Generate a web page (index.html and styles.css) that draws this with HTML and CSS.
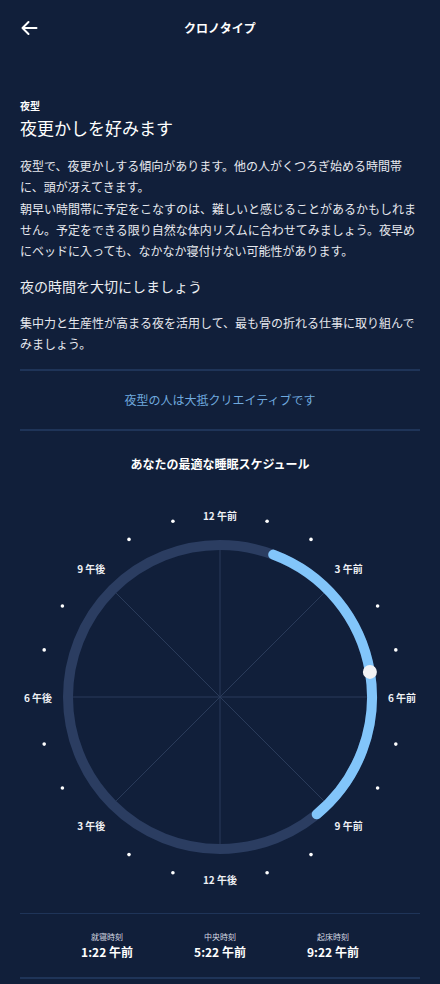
FILE: index.html
```html
<!DOCTYPE html>
<html lang="ja">
<head>
<meta charset="utf-8">
<title>クロノタイプ</title>
<link rel="stylesheet" href="styles.css">
</head>
<body>
<header class="topbar">
  <div class="back">
    <svg width="18" height="16" viewBox="0 0 18 16"><path d="M16.5 8H2.5M8.5 2L2.5 8L8.5 14" fill="none" stroke="#fff" stroke-width="2" stroke-linecap="round" stroke-linejoin="round"/></svg>
  </div>
  <div class="title">クロノタイプ</div>
  <div></div>
</header>
<main class="content">
  <div class="kicker">夜型</div>
  <h1 class="heading">夜更かしを好みます</h1>
  <p class="para">夜型で、夜更かしする傾向があります。他の人がくつろぎ始める時間帯に、頭が冴えてきます。<br>朝早い時間帯に予定をこなすのは、難しいと感じることがあるかもしれません。予定をできる限り自然な体内リズムに合わせてみましょう。夜早めにベッドに入っても、なかなか寝付けない可能性があります。</p>
  <h2 class="subhead">夜の時間を大切にしましょう</h2>
  <p class="para para2">集中力と生産性が高まる夜を活用して、最も骨の折れる仕事に取り組んでみましょう。</p>
  <div class="tagline">夜型の人は大抵クリエイティブです</div>
  <div class="chart-title">あなたの最適な睡眠スケジュール</div>
  <svg class="clock" width="400" height="390" viewBox="0 0 400 390">
    <g stroke="#2a3b5a" stroke-width="1">
      <line x1="200" y1="48" x2="200" y2="342"/>
      <line x1="53" y1="195" x2="347" y2="195"/>
      <line x1="96.1" y1="91.1" x2="303.9" y2="298.9"/>
      <line x1="303.9" y1="91.1" x2="96.1" y2="298.9"/>
    </g>
    <circle cx="200" cy="195" r="152" fill="none" stroke="#2b3d61" stroke-width="10"/>
    <path d="M253.23 52.62 A152 152 0 0 1 296.69 312.28" fill="none" stroke="#82c5fa" stroke-width="10" stroke-linecap="round"/>
    <circle cx="349.9" cy="169.9" r="7" fill="#f2f2f4"/>
    <g fill="#ffffff">
      <circle cx="247.1" cy="19.2" r="1.8"/>
      <circle cx="291" cy="37.4" r="1.8"/>
      <circle cx="357.6" cy="104" r="1.8"/>
      <circle cx="375.8" cy="147.9" r="1.8"/>
      <circle cx="375.8" cy="242.1" r="1.8"/>
      <circle cx="357.6" cy="286" r="1.8"/>
      <circle cx="291" cy="352.6" r="1.8"/>
      <circle cx="247.1" cy="370.8" r="1.8"/>
      <circle cx="152.9" cy="370.8" r="1.8"/>
      <circle cx="109" cy="352.6" r="1.8"/>
      <circle cx="42.4" cy="286" r="1.8"/>
      <circle cx="24.2" cy="242.1" r="1.8"/>
      <circle cx="24.2" cy="147.9" r="1.8"/>
      <circle cx="42.4" cy="104" r="1.8"/>
      <circle cx="109" cy="37.4" r="1.8"/>
      <circle cx="152.9" cy="19.2" r="1.8"/>
    </g>
    <g class="hour">
      <text x="200" y="13">12 午前</text>
      <text x="328.7" y="66.3">3 午前</text>
      <text x="382" y="195">6 午前</text>
      <text x="328.7" y="323.7">9 午前</text>
      <text x="200" y="377">12 午後</text>
      <text x="71.3" y="323.7">3 午後</text>
      <text x="18" y="195">6 午後</text>
      <text x="71.3" y="66.3">9 午後</text>
    </g>
  </svg>
  <div class="summary">
    <div class="stat"><div class="stat-label">就寝時刻</div><div class="stat-value">1:22 午前</div></div>
    <div class="stat"><div class="stat-label">中央時刻</div><div class="stat-value">5:22 午前</div></div>
    <div class="stat"><div class="stat-label">起床時刻</div><div class="stat-value">9:22 午前</div></div>
  </div>
</main>
</body>
</html>
```
FILE: styles.css
```css
html, body {
  margin: 0;
  padding: 0;
  background: #111f3a;
}
body {
  font-family: "Noto Sans CJK JP", "Noto Sans", sans-serif;
  color: #ffffff;
  width: 440px;
  min-height: 984px;
}
.topbar {
  height: 56px;
  display: grid;
  grid-template-columns: 1fr auto 1fr;
  align-items: center;
  padding: 0 20px;
}
.back {
  display: flex;
  align-items: center;
  height: 16px;
}
.back svg { display: block; }
.title {
  font-size: 12px;
  font-weight: 700;
  line-height: 16px;
}
.content {
  padding: 43px 20px 0;
}
.kicker {
  font-size: 10px;
  font-weight: 700;
  line-height: 14px;
}
.heading {
  margin: 3px 0 0;
  font-size: 17px;
  font-weight: 400;
  line-height: 24px;
}
.para {
  margin: 15px 0 0;
  font-size: 12px;
  line-height: 21.25px;
  color: #e6e8ee;
}
.subhead {
  margin: 15px 0 0;
  font-size: 14px;
  font-weight: 400;
  line-height: 20px;
  color: #eceef2;
}
.para2 {
  margin-top: 16px;
  line-height: 21px;
}
.tagline {
  margin-top: 15px;
  border-top: 2px solid #1f3458;
  border-bottom: 2px solid #1f3458;
  padding: 19px 0;
  text-align: center;
  font-size: 12px;
  line-height: 20px;
  color: #6fa9de;
}
.chart-title {
  margin-top: 24px;
  text-align: center;
  font-size: 12px;
  font-weight: 700;
  line-height: 18px;
}
.clock {
  display: block;
  margin-top: 29px;
}
.hour text {
  fill: #eef0f4;
  font-size: 10px;
  font-weight: 700;
  text-anchor: middle;
  dominant-baseline: central;
}
.summary {
  margin-top: 21px;
  border-top: 1.5px solid #1f3458;
  border-bottom: 2px solid #1f3458;
  padding: 17px 0 16px;
  display: flex;
  justify-content: space-evenly;
}
.stat {
  display: flex;
  flex-direction: column;
  align-items: center;
}
.stat-label {
  font-size: 8px;
  line-height: 12px;
  color: #d6dae2;
}
.stat-value {
  font-size: 12px;
  font-weight: 700;
  line-height: 18px;
}
```
